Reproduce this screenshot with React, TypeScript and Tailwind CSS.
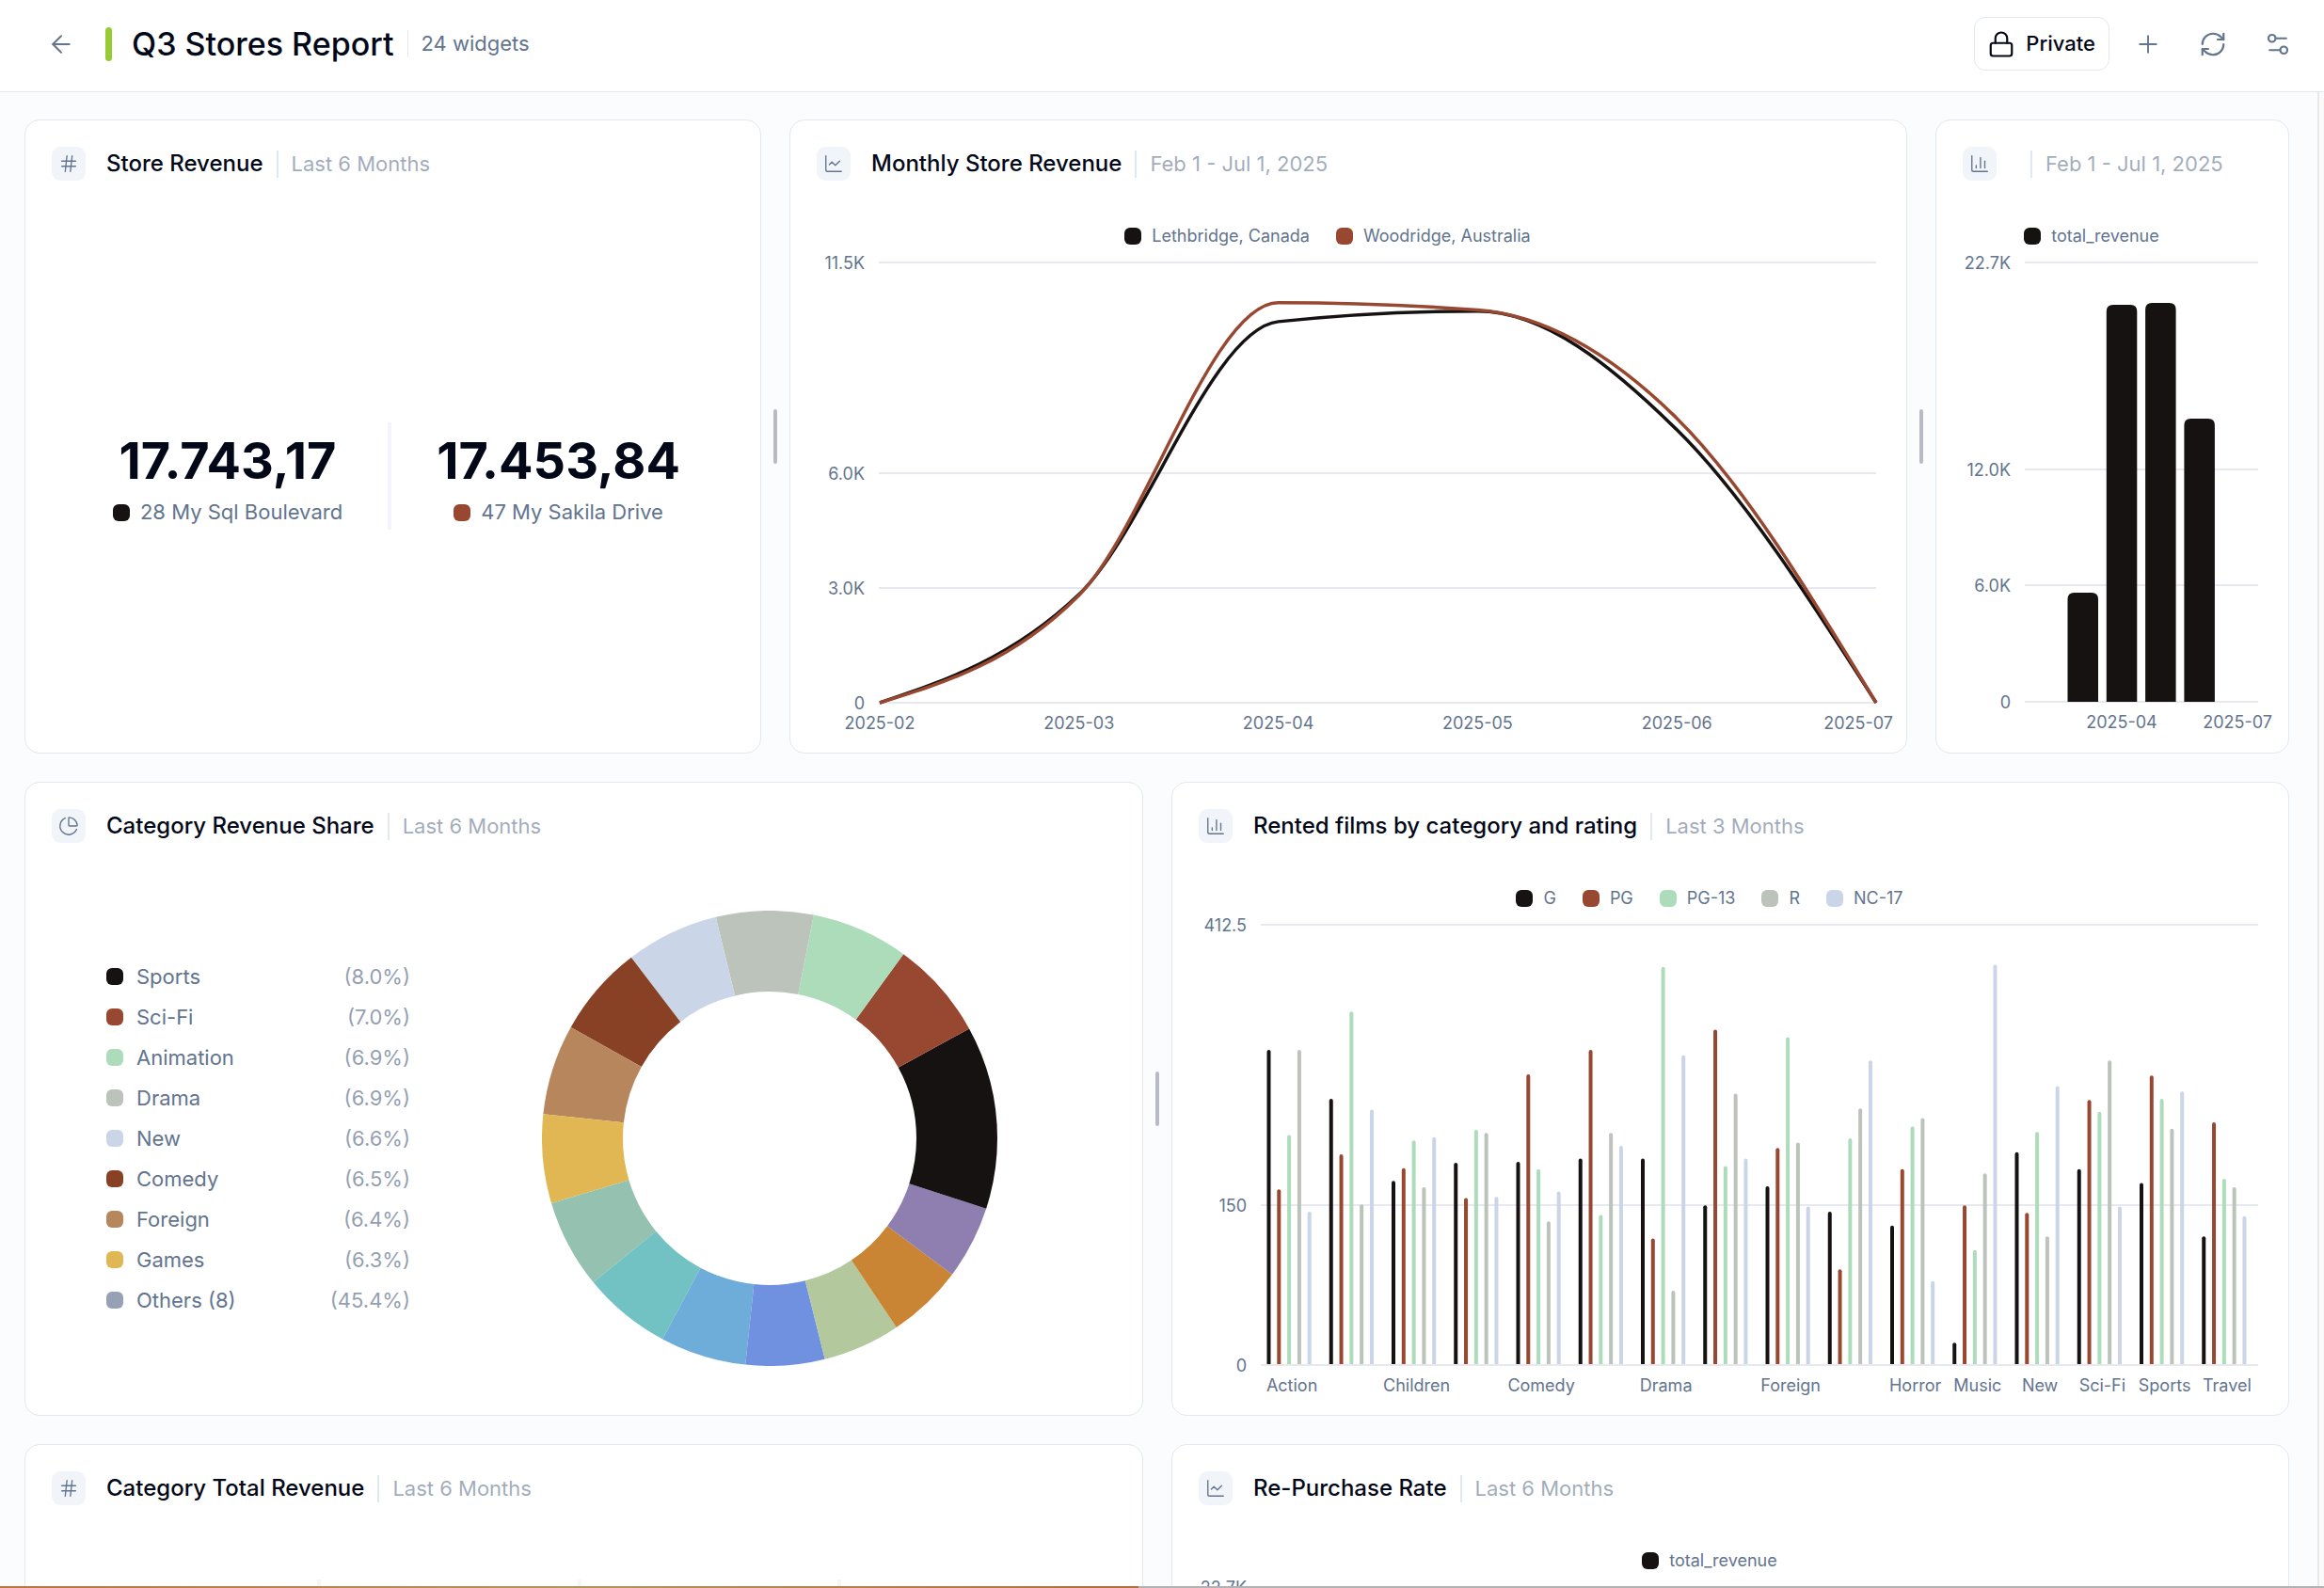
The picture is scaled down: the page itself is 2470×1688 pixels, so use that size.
import type { ReactNode } from 'react'
import {
  ArrowLeft,
  ChartColumn,
  ChartLine,
  ChartPie,
  Hash,
  Lock,
  Plus,
  RefreshCw,
  Settings2,
  type LucideIcon,
} from 'lucide-react'

const BLACK = '#161211'
const RED = '#984830'
const GREEN = '#addcba'
const GRAY = '#bcc3bb'
const BLUE = '#cad5e8'

type Series = { name: string; color: string }

const stores: (Series & { values: number[] })[] = [
  { name: 'Lethbridge, Canada', color: BLACK, values: [0, 2830, 9955, 10228, 7130, 0] },
  { name: 'Woodridge, Australia', color: RED, values: [0, 2810, 10449, 10260, 7430, 0] },
]

const months = ['2025-02', '2025-03', '2025-04', '2025-05', '2025-06', '2025-07']

const ratings: Series[] = [
  { name: 'G', color: BLACK },
  { name: 'PG', color: RED },
  { name: 'PG-13', color: GREEN },
  { name: 'R', color: GRAY },
  { name: 'NC-17', color: BLUE },
]

const rentals: { label: string; values: number[] }[] = [
  { label: 'Action', values: [295, 164, 215, 295, 143] },
  { label: '', values: [249, 197, 331, 150, 239] },
  { label: 'Children', values: [172, 184, 210, 166, 213] },
  { label: '', values: [189, 156, 220, 217, 157] },
  { label: 'Comedy', values: [190, 272, 183, 134, 162] },
  { label: '', values: [193, 295, 140, 217, 205] },
  { label: 'Drama', values: [193, 118, 373, 69, 290] },
  { label: '', values: [149, 314, 186, 254, 193] },
  { label: 'Foreign', values: [167, 203, 307, 208, 148] },
  { label: '', values: [143, 89, 212, 240, 285] },
  { label: 'Horror', values: [130, 183, 223, 231, 78] },
  { label: 'Music', values: [20, 149, 107, 179, 375] },
  { label: 'New', values: [199, 142, 218, 120, 261] },
  { label: 'Sci-Fi', values: [183, 248, 237, 285, 148] },
  { label: 'Sports', values: [170, 271, 249, 221, 256] },
  { label: 'Travel', values: [120, 227, 174, 166, 139] },
]

const shares = [
  { name: 'Sports', share: '8.0', color: BLACK },
  { name: 'Sci-Fi', share: '7.0', color: RED },
  { name: 'Animation', share: '6.9', color: GREEN },
  { name: 'Drama', share: '6.9', color: GRAY },
  { name: 'New', share: '6.6', color: BLUE },
  { name: 'Comedy', share: '6.5', color: '#884124' },
  { name: 'Foreign', share: '6.4', color: '#b7865c' },
  { name: 'Games', share: '6.3', color: '#e0b753' },
  { name: 'Others (8)', share: '45.4', color: '#97a1b6' },
]

// the last eight slices are grouped as "Others" in the legend
const slices = [
  ...shares.slice(0, 8).map((s) => ({ value: Number(s.share), color: s.color })),
  { value: 6.3, color: '#95c2b0' },
  { value: 6.3, color: '#73c2c3' },
  { value: 6.1, color: '#6eacd9' },
  { value: 5.6, color: '#7090e0' },
  { value: 5.5, color: '#b3c89c' },
  { value: 5.4, color: '#ca8534' },
  { value: 5.2, color: '#8e7fb0' },
  { value: 5.0, color: BLACK },
]

function Card(props: { icon: LucideIcon; title?: string; period: string; children?: ReactNode }) {
  const { icon: Icon, title, period, children } = props
  return (
    <section className="flex min-h-[674px] min-w-0 flex-col overflow-hidden rounded-2xl border border-[#e2e8f0] bg-white">
      <header className="flex items-center px-7 pt-7 pb-5">
        <span className="mr-[22px] flex size-9 shrink-0 items-center justify-center rounded-[9px] bg-slate-100 text-slate-500">
          <Icon size={22} strokeWidth={1.5} aria-hidden />
        </span>
        {title && <h2 className="text-[24px] leading-9 font-medium whitespace-nowrap text-[#020817]">{title}</h2>}
        <span className="ml-[14px] border-l-2 border-slate-200 pl-[14px] text-[22px] leading-[29px] whitespace-nowrap text-slate-500/60">
          {period}
        </span>
      </header>
      {children}
    </section>
  )
}

function Handle() {
  return (
    <div className="flex items-center justify-center">
      <div className="h-[58px] w-1 rounded-full bg-[#b8bbc3]" />
    </div>
  )
}

function Swatch({ color }: { color: string }) {
  return <span className="size-[18px] shrink-0 rounded-md" style={{ backgroundColor: color }} />
}

function Legend({ items }: { items: Series[] }) {
  return (
    <ul className="flex justify-center gap-7 pt-7 pr-11">
      {items.map((item) => (
        <li key={item.name} className="flex items-center gap-[11px] text-[18px] leading-[22px] text-slate-500">
          <Swatch color={item.color} />
          {item.name}
        </li>
      ))}
    </ul>
  )
}

type Tick = { y: number; label: string }

function Grid({ ticks, right }: { ticks: Tick[]; right: number }) {
  return (
    <g>
      {ticks.map((tick) => (
        <g key={tick.label}>
          <rect x={94} y={tick.y - 1} width={right - 94} height={2} fill="#e8e9ee" />
          <AxisText x={79} y={tick.y} anchor="end">
            {tick.label}
          </AxisText>
        </g>
      ))}
    </g>
  )
}

function AxisText(props: { x: number; y: number; anchor?: 'middle' | 'end'; children: ReactNode }) {
  const { x, y, anchor = 'middle', children } = props
  return (
    <text x={x} y={y} textAnchor={anchor} dominantBaseline="central" className="fill-slate-500 text-[18px]">
      {children}
    </text>
  )
}

// monotone cubic interpolation, so the curve never overshoots a point
function monotonePath(points: [number, number][]) {
  const n = points.length
  const slope = (i: number) => (points[i + 1][1] - points[i][1]) / (points[i + 1][0] - points[i][0])
  const tangents = points.map(() => 0)
  for (let i = 1; i < n - 1; i++) {
    const a = slope(i - 1)
    const b = slope(i)
    const p = (a + b) / 2
    tangents[i] = (Math.sign(a) + Math.sign(b)) * Math.min(Math.abs(a), Math.abs(b), 0.5 * Math.abs(p))
  }
  tangents[0] = (3 * slope(0) - tangents[1]) / 2
  tangents[n - 1] = (3 * slope(n - 2) - tangents[n - 2]) / 2

  let d = `M${points[0][0]},${points[0][1]}`
  for (let i = 0; i < n - 1; i++) {
    const [x0, y0] = points[i]
    const [x1, y1] = points[i + 1]
    const dx = (x1 - x0) / 3
    d += `C${x0 + dx},${y0 + dx * tangents[i]} ${x1 - dx},${y1 - dx * tangents[i + 1]} ${x1},${y1}`
  }
  return d
}

function LineChart() {
  const step = (1154 - 95) / 5
  return (
    <svg viewBox="0 0 1186 530" className="block w-full" role="img" aria-label="Monthly store revenue">
      <Grid
        right={1154}
        ticks={[
          { y: 17, label: '11.5K' },
          { y: 241, label: '6.0K' },
          { y: 363, label: '3.0K' },
          { y: 485, label: '0' },
        ]}
      />
      {stores.map((store) => (
        <path
          key={store.name}
          d={monotonePath(store.values.map((v, i) => [95 + i * step, 485 - (v / 11500) * 468]))}
          fill="none"
          stroke={store.color}
          strokeWidth={3.5}
        />
      ))}
      {months.slice(0, 5).map((month, i) => (
        <AxisText key={month} x={95 + i * step} y={506}>
          {month}
        </AxisText>
      ))}
      <AxisText x={1172} y={506} anchor="end">
        {months[5]}
      </AxisText>
    </svg>
  )
}

function bar(x: number, top: number, width: number, radius: number, bottom = 484) {
  return `M${x},${bottom}V${top + radius}q0,${-radius} ${radius},${-radius}h${width - radius * 2}q${radius},0 ${radius},${radius}V${bottom}Z`
}

function RevenueBars() {
  const tops = [368, 62, 60, 183]
  return (
    <svg viewBox="0 0 374 530" className="block w-full" role="img" aria-label="Total revenue per month">
      <Grid
        right={342}
        ticks={[
          { y: 17, label: '22.7K' },
          { y: 237, label: '12.0K' },
          { y: 360, label: '6.0K' },
          { y: 484, label: '0' },
        ]}
      />
      {tops.map((top, i) => (
        <path key={top} d={bar(139.5 + i * 41.3, top, 32.5, 7)} fill={BLACK} />
      ))}
      <AxisText x={197} y={505}>
        2025-04
      </AxisText>
      <AxisText x={357} y={505} anchor="end">
        2025-07
      </AxisText>
    </svg>
  )
}

function RentalBars() {
  const step = 1060 / rentals.length
  return (
    <svg viewBox="0 0 1186 530" className="block w-full" role="img" aria-label="Rented films by category and rating">
      <Grid
        right={1154}
        ticks={[
          { y: 17, label: '412.5' },
          { y: 315, label: '150' },
          { y: 485, label: '0' },
        ]}
      />
      {rentals.map((group, i) => (
        <g key={i}>
          {group.values.map((v, j) => (
            <path
              key={j}
              d={bar(94 + i * step + 6.5 + j * 10.8, 484 - (v / 412.5) * 467, 4, 2)}
              fill={ratings[j].color}
            />
          ))}
          {group.label && (
            <AxisText x={94 + (i + 0.5) * step} y={506}>
              {group.label}
            </AxisText>
          )}
        </g>
      ))}
    </svg>
  )
}

function Donut() {
  const outer = 242
  const inner = 156
  const point = (r: number, percent: number) => {
    const a = (percent / 100) * Math.PI * 2
    return `${242 + r * Math.cos(a)},${242 - r * Math.sin(a)}`
  }
  let total = 0
  return (
    <svg viewBox="0 0 484 484" className="block w-[484px] max-w-full" role="img" aria-label="Category revenue share">
      {slices.map((slice, i) => {
        const from = total
        const to = i === slices.length - 1 ? 100 : from + slice.value
        total = to
        return (
          <path
            key={i}
            fill={slice.color}
            d={`M${point(outer, from)}A${outer},${outer} 0 0 0 ${point(outer, to)}L${point(inner, to)}A${inner},${inner} 0 0 1 ${point(inner, from)}Z`}
          />
        )
      })}
    </svg>
  )
}

function Kpi({ value, label, color }: { value: string; label: string; color: string }) {
  return (
    <div className="flex flex-col items-center gap-2 px-12 pt-[9px] pb-[3px]">
      <span className="text-[54px] leading-[63px] font-bold text-[#020817]">{value}</span>
      <span className="flex items-center gap-[11px] text-[22px] leading-[31px] text-slate-500">
        <Swatch color={color} />
        {label}
      </span>
    </div>
  )
}

function IconButton(props: { icon: LucideIcon; label: string; strokeWidth?: number }) {
  const { icon: Icon, label, strokeWidth = 1.75 } = props
  return (
    <button
      type="button"
      aria-label={label}
      className="flex size-[57px] items-center justify-center rounded-xl text-slate-500 hover:bg-slate-100"
    >
      <Icon size={30} strokeWidth={strokeWidth} aria-hidden />
    </button>
  )
}

export default function App() {
  return (
    <div className="flex h-screen flex-col overflow-hidden bg-white font-[Inter,sans-serif]">
      <header className="flex shrink-0 items-center justify-between border-b border-slate-200 pt-[18px] pr-[21px] pb-[22px] pl-9">
        <div className="flex items-center">
          <IconButton icon={ArrowLeft} label="Back" strokeWidth={1.5} />
          <span className="mr-[21px] ml-[19px] h-9 w-[7px] rounded-full bg-[#96cc33]" />
          <h1 className="text-[34px] leading-[57px] font-medium text-[#020817]">Q3 Stores Report</h1>
          <span className="ml-[14px] border-l border-slate-200 pl-[14px] text-[22px] leading-[29px] text-slate-500">
            24 widgets
          </span>
        </div>
        <div className="flex items-center gap-3">
          <button
            type="button"
            className="flex h-[57px] items-center gap-[11px] rounded-xl border border-slate-200 pr-[14px] pl-[13px] text-[22px] font-medium text-[#020817]"
          >
            <Lock size={30} strokeWidth={1.75} aria-hidden />
            Private
          </button>
          <IconButton icon={Plus} label="Add widget" strokeWidth={1.5} />
          <IconButton icon={RefreshCw} label="Refresh" />
          <IconButton icon={Settings2} label="Settings" />
        </div>
      </header>

      <div className="flex min-h-0 flex-1">
        <main className="flex min-w-0 flex-1 flex-col gap-[30px] overflow-hidden bg-[#fbfcfe] pt-[29px] pr-[30px] pl-[26px]">
          <div className="grid shrink-0 grid-cols-[783fr_30px_1188fr_30px_376fr]">
            <Card icon={Hash} title="Store Revenue" period="Last 6 Months">
              <div className="flex flex-1 items-center justify-center pl-2">
                <Kpi value="17.743,17" label="28 My Sql Boulevard" color={BLACK} />
                <div className="w-1 self-center bg-[#f4f5fa] py-[57px]" />
                <Kpi value="17.453,84" label="47 My Sakila Drive" color={RED} />
              </div>
            </Card>
            <Handle />
            <Card icon={ChartLine} title="Monthly Store Revenue" period="Feb 1 - Jul 1, 2025">
              <Legend items={stores} />
              <LineChart />
            </Card>
            <Handle />
            <Card icon={ChartColumn} period="Feb 1 - Jul 1, 2025">
              <Legend items={[{ name: 'total_revenue', color: BLACK }]} />
              <RevenueBars />
            </Card>
          </div>

          <div className="grid shrink-0 grid-cols-[1189fr_30px_1188fr]">
            <Card icon={ChartPie} title="Category Revenue Share" period="Last 6 Months">
              <div className="flex flex-1 items-center gap-[140px] pl-[86px]">
                <ul className="flex w-[323px] shrink-0 flex-col gap-3">
                  {shares.map((s) => (
                    <li key={s.name} className="flex items-center gap-[14px] text-[22px] leading-[31px] text-slate-500">
                      <Swatch color={s.color} />
                      {s.name}
                      <span className="ml-auto text-slate-500/70">({s.share}%)</span>
                    </li>
                  ))}
                </ul>
                <Donut />
              </div>
            </Card>
            <Handle />
            <Card icon={ChartColumn} title="Rented films by category and rating" period="Last 3 Months">
              <Legend items={ratings} />
              <RentalBars />
            </Card>
          </div>

          <div className="grid shrink-0 grid-cols-[1189fr_30px_1188fr]">
            <Card icon={Hash} title="Category Total Revenue" period="Last 6 Months">
              <div className="mt-[59px] mr-[43px] ml-[37px] grid h-[115px] grid-cols-4 divide-x-4 divide-[#f5f6f9]">
                <div />
                <div />
                <div />
                <div />
              </div>
            </Card>
            <Handle />
            <Card icon={ChartLine} title="Re-Purchase Rate" period="Last 6 Months">
              <Legend items={[{ name: 'total_revenue', color: BLACK }]} />
              <svg viewBox="0 0 1186 530" className="block w-full" role="img" aria-label="Re-purchase rate">
                <Grid right={1154} ticks={[{ y: 17, label: '22.7K' }]} />
              </svg>
            </Card>
          </div>
        </main>
        <div className="w-[7px] shrink-0 border-l-2 border-[#e8e8e8] bg-[#fafafa]" />
      </div>

      <div className="flex h-[2px] shrink-0">
        <div className="w-[49%] bg-linear-to-r from-[#b87642] via-[#b3935f] to-[#b06f3c]" />
        <div className="flex-1 bg-[#b2b2b2]" />
      </div>
    </div>
  )
}
